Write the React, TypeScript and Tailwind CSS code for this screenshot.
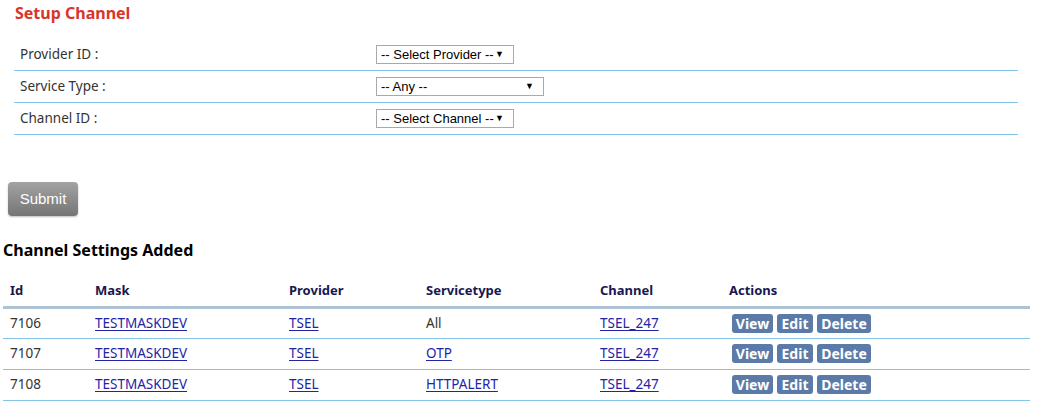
import React from "react";

const formRows = [
  { label: "Provider ID :", value: "-- Select Provider --", width: "w-[138px]" },
  { label: "Service Type :", value: "-- Any --", width: "w-[168px]" },
  { label: "Channel ID :", value: "-- Select Channel --", width: "w-[138px]" },
];

const rows = [
  { id: "7106", mask: "TESTMASKDEV", provider: "TSEL", service: "All", serviceLink: false, channel: "TSEL_247" },
  { id: "7107", mask: "TESTMASKDEV", provider: "TSEL", service: "OTP", serviceLink: true, channel: "TSEL_247" },
  { id: "7108", mask: "TESTMASKDEV", provider: "TSEL", service: "HTTPALERT", serviceLink: true, channel: "TSEL_247" },
];

const link = "text-[#2323a8] underline underline-offset-[2px]";

function FakeSelect({ value, width }: { value: string; width: string }) {
  return (
    <div
      className={`${width} flex h-[19px] items-center justify-between border border-[#a9a9a9] bg-white pl-[4px] pr-[9px] font-['Liberation_Sans',Arial,sans-serif] text-[13px] text-black`}
    >
      <span>{value}</span>
      <span className="text-[9px]">▼</span>
    </div>
  );
}

function ActionButton({ label, width }: { label: string; width: string }) {
  return (
    <span
      className={`${width} flex h-[19px] items-center justify-center rounded-[3px] bg-[#5c7aa7] text-[14px] font-bold text-white`}
    >
      {label}
    </span>
  );
}

export default function App() {
  return (
    <div className="h-[417px] w-[1038px] overflow-hidden bg-white font-['Noto_Sans','Open_Sans',sans-serif] text-[13.5px] text-[#333]">
      <h1 className="pl-[15px] pt-[2px] text-[16px] font-bold leading-[22px] text-[#d9342b]">
        Setup Channel
      </h1>

      <div className="ml-[14px] mt-[15px] w-[1004px]">
        {formRows.map((r) => (
          <div
            key={r.label}
            className="flex h-[32px] items-center border-b border-[#86c3e6]"
          >
            <div className="w-[362px] pl-[6px]">{r.label}</div>
            <FakeSelect value={r.value} width={r.width} />
          </div>
        ))}
      </div>

      <button className="ml-[8px] mt-[47px] flex h-[34px] w-[70px] items-center justify-center rounded-[4px] bg-gradient-to-b from-[#a3a3a3] to-[#757575] font-['Liberation_Sans',Arial,sans-serif] text-[15px] text-white shadow-[0_1px_2px_rgba(0,0,0,0.25)]">
        Submit
      </button>

      <h2 className="ml-[3px] mt-[23px] text-[16px] font-bold leading-[22px] text-black">
        Channel Settings Added
      </h2>

      <table className="ml-[3px] mt-[18px] w-[1027px] border-collapse">
        <thead>
          <tr className="h-[28px] border-b-[3px] border-[#adc3d3] text-left text-[13px] font-bold text-[#17184f]">
            <th className="w-[85px] pl-[7px] pt-[2px] align-top">Id</th>
            <th className="w-[194px] pl-[7px] pt-[2px] align-top">Mask</th>
            <th className="w-[137px] pl-[7px] pt-[2px] align-top">Provider</th>
            <th className="w-[174px] pl-[7px] pt-[2px] align-top">Servicetype</th>
            <th className="w-[129px] pl-[7px] pt-[2px] align-top">Channel</th>
            <th className="pl-[7px] pt-[2px] align-top">Actions</th>
          </tr>
        </thead>
        <tbody>
          {rows.map((r) => (
            <tr key={r.id} className="h-[31px] border-b border-[#86c3e6]">
              <td className="pl-[7px]">{r.id}</td>
              <td className="pl-[7px]">
                <a className={link}>{r.mask}</a>
              </td>
              <td className="pl-[7px]">
                <a className={link}>{r.provider}</a>
              </td>
              <td className="pl-[7px]">
                {r.serviceLink ? <a className={link}>{r.service}</a> : r.service}
              </td>
              <td className="pl-[7px]">
                <a className={link}>{r.channel}</a>
              </td>
              <td className="pl-[7px]">
                <div className="ml-[3px] flex gap-[4px]">
                  <ActionButton label="View" width="w-[41px]" />
                  <ActionButton label="Edit" width="w-[36px]" />
                  <ActionButton label="Delete" width="w-[54px]" />
                </div>
              </td>
            </tr>
          ))}
        </tbody>
      </table>
    </div>
  );
}
